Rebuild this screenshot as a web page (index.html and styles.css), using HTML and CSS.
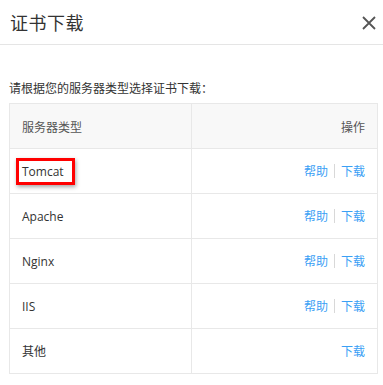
FILE: index.html
```html
<!DOCTYPE html>
<html lang="zh-CN">
<head>
    <meta charset="UTF-8">
    <meta name="viewport" content="width=device-width, initial-scale=1.0">
    <title>证书下载</title>
    <link rel="stylesheet" href="styles.css">
</head>
<body>
    <div class="dialog">
        <div class="dialog-header">
            <span class="dialog-title">证书下载</span>
            <span class="close">
                <svg width="14" height="14" viewBox="0 0 14 14">
                    <path d="M1 1L13 13M13 1L1 13" stroke="#555" stroke-width="1.8" fill="none"/>
                </svg>
            </span>
        </div>
        <div class="dialog-body">
            <p class="tip">请根据您的服务器类型选择证书下载：</p>
            <table class="cert-table">
                <thead>
                    <tr>
                        <th class="col-type">服务器类型</th>
                        <th class="col-op">操作</th>
                    </tr>
                </thead>
                <tbody>
                    <tr>
                        <td><span class="mark">Tomcat</span></td>
                        <td class="col-op"><a href="#">帮助</a><i class="sep"></i><a href="#">下载</a></td>
                    </tr>
                    <tr>
                        <td>Apache</td>
                        <td class="col-op"><a href="#">帮助</a><i class="sep"></i><a href="#">下载</a></td>
                    </tr>
                    <tr>
                        <td>Nginx</td>
                        <td class="col-op"><a href="#">帮助</a><i class="sep"></i><a href="#">下载</a></td>
                    </tr>
                    <tr>
                        <td>IIS</td>
                        <td class="col-op"><a href="#">帮助</a><i class="sep"></i><a href="#">下载</a></td>
                    </tr>
                    <tr>
                        <td>其他</td>
                        <td class="col-op"><a href="#">下载</a></td>
                    </tr>
                </tbody>
            </table>
        </div>
    </div>
</body>
</html>
```

FILE: styles.css
```css
body {
    margin: 0;
    background: #fff;
    font-family: "Open Sans", "Noto Sans CJK SC", sans-serif;
    color: #333;
}
.dialog {
    width: 383px;
}
.dialog-header {
    height: 44px;
    border-bottom: 1px solid #e5e5e5;
    display: flex;
    align-items: center;
    justify-content: space-between;
    padding: 0 6px 0 10px;
}
.dialog-title {
    font-family: "Noto Sans CJK SC", sans-serif;
    font-size: 18px;
    color: #333;
    letter-spacing: 0.5px;
}
.close {
    display: flex;
    width: 14px;
    height: 14px;
    margin-right: 1px;
    margin-top: 1px;
}
.dialog-body {
    padding: 34px 5px 0 9px;
}
.tip {
    margin: 0 0 6px 0;
    font-family: "Noto Sans CJK SC", sans-serif;
    font-size: 12px;
    line-height: 18px;
    color: #333;
}
.cert-table {
    width: 369px;
    border-collapse: collapse;
    font-size: 12px;
}
.cert-table th,
.cert-table td {
    border: 1px solid #e8e8e8;
    height: 45px;
    padding: 0 12px;
    text-align: left;
    font-weight: normal;
    color: #333;
    box-sizing: border-box;
}
.cert-table th {
    background: #f8f8f8;
    font-family: "Noto Sans CJK SC", sans-serif;
    color: #555;
}
.cert-table .col-type {
    width: 182px;
}
.cert-table .col-op {
    text-align: right;
}
.cert-table a {
    color: #3aa0f5;
    text-decoration: none;
    font-family: "Noto Sans CJK SC", sans-serif;
}
.sep {
    display: inline-block;
    width: 1px;
    height: 14px;
    background: #d8d8d8;
    margin: 0 6px;
    vertical-align: -2px;
}
.mark {
    display: inline-block;
    border: 3px solid #f00;
    padding: 3px 8px 3px 3px;
    margin-left: -6px;
    box-shadow: 1px 2px 4px rgba(0, 0, 0, 0.35);
    line-height: 15px;
}
```
